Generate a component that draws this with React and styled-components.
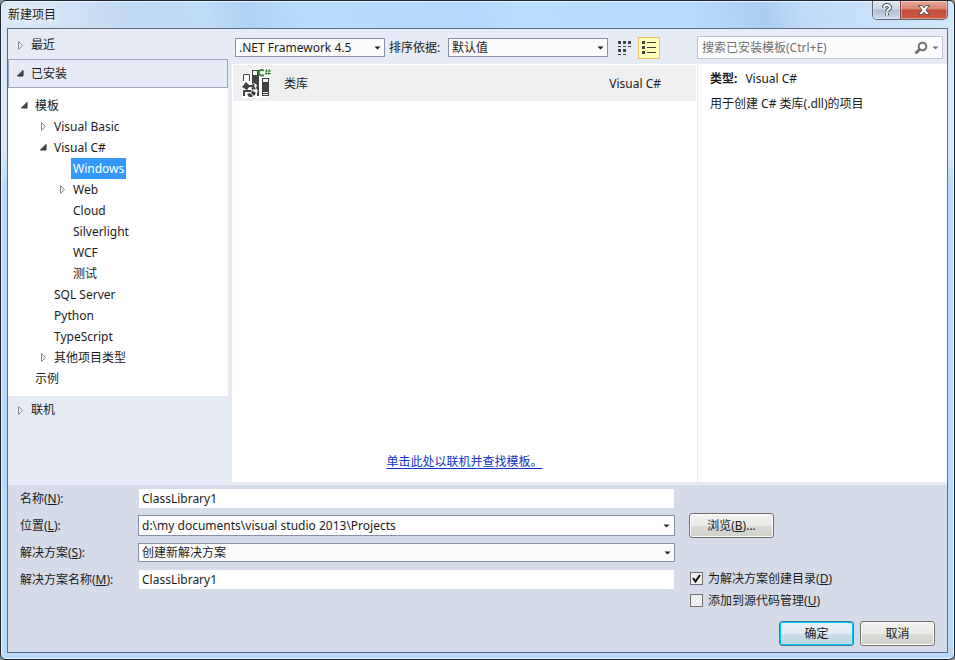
import React, { useState } from "react";
import styled, { createGlobalStyle, css } from "styled-components";

const GlobalStyle = createGlobalStyle`
  *, *::before, *::after { box-sizing: border-box; }
  body {
    margin: 0;
    background: #8a8f98;
    color: #1b1b1c;
    font-family: "Noto Sans", "Noto Sans CJK SC", sans-serif;
    font-size: 12px;
    line-height: 16px;
  }
  button, input, select { font: inherit; color: inherit; margin: 0; }
  u { text-underline-offset: 1px; }
`;

const Window = styled.main`
  display: flex;
  flex-direction: column;
  min-height: 100vh;
  padding: 0 6px 6px;
  border: 1px solid #22262e;
  border-radius: 6px;
  box-shadow: inset 0 0 0 1px #e4f3fd;
  background:
    linear-gradient(75deg, #d9e9f9 0, #cfe2f5 8%, #c3daf2 13%, #bfdcf8 22%, #b0d1f3 26%, #b9dcfd 32%, #b5d9fc 50%, #bbddff 54%, #b9dbfd 72%, #accdf0 80%, #c0dcf8 84%, #d3e8fb 100%) top / 100% 29px no-repeat,
    linear-gradient(#d6e8f9 0 155px, #b9dafb 185px);
`;

const TitleBar = styled.header`
  display: flex;
  justify-content: space-between;
  height: 27px;
`;

const Title = styled.h1`
  margin: 0;
  padding: 6px 0 0 1px;
  font-size: 12px;
  font-weight: 400;
  text-shadow: 0 0 6px #fff, 0 0 10px #fff;
`;

const Captions = styled.div`
  display: flex;
  height: 19px;
  border: 1px solid #5c6673;
  border-top: 0;
  border-radius: 0 0 5px 5px;
  overflow: hidden;
`;

const CaptionButton = styled.button`
  display: grid;
  place-items: center;
  width: ${(p) => (p.$close ? "47px" : "27px")};
  padding: 0;
  border: 0;
  box-shadow: inset 0 0 0 1px rgba(255, 255, 255, 0.4);
  background: ${(p) =>
    p.$close
      ? "linear-gradient(#e9a89b 0, #d98474 45%, #c04a3a 50%, #cf5b44 100%)"
      : "linear-gradient(#dfe8f2 0, #cbd6e4 45%, #b0bdce 50%, #c9dbee 100%)"};
  & + & { border-left: 1px solid #7c3a38; }
`;

const Client = styled.div`
  display: flex;
  flex: 1;
  flex-direction: column;
  border: 1px solid #5d6e82;
  background: #e6ebf5;
`;

const Panes = styled.div`
  display: grid;
  flex: 1;
  grid-template-columns: 224px minmax(0, 1fr) 250px;
  padding-bottom: 3px;
`;

const Sidebar = styled.nav`
  padding: 2px 4px 0 0;
`;

const Section = styled.button`
  display: flex;
  align-items: center;
  gap: 6px;
  width: 100%;
  height: ${(p) => (p.$open ? "29px" : "28px")};
  padding: 0 7px;
  border: 1px solid ${(p) => (p.$open ? "#9ba7b7" : "transparent")};
  background: none;
`;

const Tree = styled.ul`
  margin: 0;
  padding: 7px 0;
  list-style: none;
  background: #fff;
`;

const TreeItem = styled.li`
  display: flex;
  align-items: center;
  gap: 4px;
  height: 21px;
  padding-left: ${(p) => 12 + p.$level * 19}px;
`;

const TreeLabel = styled.button`
  height: 21px;
  padding: 0 2px;
  border: 0;
  background: none;
  ${(p) => p.$selected && css`
    background: #3399ff;
    color: #fff;
  `}
`;

const Expander = styled.svg`
  flex: none;
  width: 9px;
  height: 9px;
`;

const Center = styled.section`
  display: flex;
  flex-direction: column;
`;

const Toolbar = styled.div`
  display: flex;
  align-items: center;
  gap: 4px;
  height: 35px;
  padding: 2px 3px 0;
`;

const SortLabel = styled.label`
  width: 55px;
  white-space: nowrap;
`;

const SelectBox = styled.div`
  display: grid;
  align-items: center;
  width: ${(p) => p.$width || "100%"};
  & > * { grid-area: 1 / 1; }
  & > svg { justify-self: end; margin-right: 4px; pointer-events: none; }
`;

const Select = styled.select`
  width: 100%;
  height: 19px;
  padding: 0 16px 0 3px;
  border: 1px solid #8591a8;
  border-radius: 0;
  background: #fcfcfc;
  appearance: none;
`;

const ViewButtons = styled.div`
  display: flex;
  gap: 2px;
  margin-left: 2px;
`;

const ViewButton = styled.button`
  display: grid;
  place-items: center;
  width: 22px;
  height: 22px;
  padding: 0;
  border: 1px solid ${(p) => (p.$active ? "#e5c365" : "transparent")};
  background: ${(p) => (p.$active ? "#fffbb8" : "none")};
`;

const TemplateList = styled.div`
  display: flex;
  flex: 1;
  flex-direction: column;
  justify-content: space-between;
  padding: 1px 1px 12px;
  background: #fff;
`;

const Template = styled.button`
  display: flex;
  align-items: center;
  width: 100%;
  height: 36px;
  padding: 2px 35px 0 7px;
  border: 0;
  background: #efefef;
  text-align: left;
`;

const TemplateName = styled.span`
  flex: 1;
  padding-left: 12px;
`;

const OnlineLink = styled.a`
  align-self: center;
  color: #0e32c8;
  text-underline-offset: 2px;
`;

const Details = styled.aside`
  display: flex;
  flex-direction: column;
`;

const SearchBar = styled.div`
  height: 35px;
  padding: 7px 4px 0 0;
`;

const SearchBox = styled.div`
  display: flex;
  align-items: center;
  height: 23px;
  padding-right: 3px;
  border: 1px solid #bcc4d5;
  background: #fcfcfc;
`;

const SearchInput = styled.input`
  flex: 1;
  min-width: 0;
  padding: 0 4px;
  border: 0;
  outline: 0;
  background: none;
  &::placeholder { color: #717171; opacity: 1; }
`;

const IconButton = styled.button`
  display: grid;
  place-items: center;
  padding: 0;
  border: 0;
  background: none;
  color: ${(p) => (p.$muted ? "#717171" : "#1b293e")};
  & + & { margin-left: 4px; }
`;

const Description = styled.div`
  flex: 1;
  padding: 7px 12px;
  border-left: 1px solid #e6ebf5;
  background: #fff;
`;

const Paragraph = styled.p`
  margin: 0 0 9px;
  & > strong { margin-right: 8px; }
`;

const Form = styled.form`
  display: grid;
  grid-template-columns: 118px minmax(0, 1fr) 260px;
  grid-template-rows: repeat(4, 27px) auto;
  align-items: center;
  padding: 0 12px 6px;
  background: #d6dbe9;
`;

const FieldLabel = styled.label`
  grid-column: 1;
`;

const TextInput = styled.input`
  grid-column: 2;
  height: 19px;
  margin: 0 1px;
  padding: 0 3px;
  border: 0;
  background: #fff;
`;

const ComboBox = styled.div`
  display: flex;
  grid-column: 2;
  height: 21px;
  padding-right: 4px;
  border: 1px solid #8591a8;
  background: #fff;
`;

const ComboInput = styled.input`
  flex: 1;
  min-width: 0;
  padding: 0 3px;
  border: 0;
  outline: 0;
  background: none;
`;

const FieldSelect = styled.div`
  grid-column: 2;
`;

const Side = styled.div`
  grid-column: 3;
  grid-row: ${(p) => p.$row};
  align-self: ${(p) => (p.$top ? "start" : "center")};
  padding-left: 14px;
`;

const Options = styled.div`
  display: grid;
  gap: 9px;
  padding: 6px 0 14px 1px;
`;

const Option = styled.label`
  display: flex;
  align-items: center;
  gap: 5px;
  line-height: 13px;
`;

const CheckMark = styled.span`
  display: grid;
  place-items: center;
  & > * { grid-area: 1 / 1; }
  & > svg { display: none; pointer-events: none; }
  & > input:checked + svg { display: block; }
`;

const CheckInput = styled.input`
  width: 13px;
  height: 13px;
  border: 1px solid #707070;
  background: #f0f0f0;
  appearance: none;
`;

const Actions = styled.div`
  display: flex;
  grid-column: 1 / -1;
  grid-row: 6;
  justify-content: flex-end;
  gap: 6px;
`;

const PushButton = styled.button`
  width: ${(p) => (p.$wide ? "85px" : "75px")};
  height: 25px;
  padding: 0;
  border: 1px solid #707070;
  border-radius: 3px;
  background: linear-gradient(#f3f3f2 0, #e9e9e8 50%, #d9d9d6 55%, #d2d2cc 100%);
  box-shadow: inset 0 0 0 1px #fafafa;
  ${(p) => p.$primary && css`
    border-color: #3c7f9c;
    background: linear-gradient(#eaf2f9 0, #dfeaf3 50%, #c9dce7 55%, #c2d8df 100%);
    box-shadow: inset 0 0 0 1px #00c8fa;
  `}
`;

const Arrow = () => (
  <svg width="7" height="4" viewBox="0 0 7 4" aria-hidden="true">
    <path d="M0.500 0.500h6L3.500 3.500z" fill="currentColor" />
  </svg>
);

const Toggle = ({ state }) => (
  <Expander viewBox="0 0 9 9" aria-hidden="true">
    {state === "open" && <path d="M7 1.500v5.500H1.500z" fill="#4a4f56" stroke="#2a2a2c" />}
    {state === "closed" && <path d="M2.500 0.500v8L6.500 4.500z" fill="#f4f4f6" stroke="#858b93" />}
  </Expander>
);

const LibraryIcon = () => (
  <svg width="32" height="32" viewBox="0 0 32 32" aria-hidden="true">
    <path d="M2 5h8V1h9V0h12v9h-2v20h-8v1H2v-9l-1-3 2-4z" fill="#fff" />
    <path d="M3.500 13V6.500h6V13" fill="#fff" stroke="#424242" />
    <path d="M12 2h7v26h-2v-3l1-2-2-3 1-3-3-2-2 1z" fill="#424242" />
    <path d="M13 3h4v4h-4z" fill="#fff" />
    <path d="M22 10h7v18h-7z" fill="#424242" />
    <path d="M23 11h5v3h-5zM23 24h5v1h-5zM23 26h5v1h-5z" fill="#efefef" />
    <path d="M6 14l4 4-3 4-5-3z" fill="#424242" />
    <path d="M3 23h2v5H3zM7 26l3-1 3 3-1 1H9z" fill="#424242" />
    <path d="M8 18h5M13.500 16v5M4 24v-1h7M11.500 20.500h4" fill="none" stroke="#424242" strokeWidth="2" />
    <path d="M12 22l4 3-2 3-3-3z" fill="#424242" />
    <path d="M24 2.500c-3.500-1.200-5-.2-5 2.200s1.500 3.500 5 2.500" fill="none" stroke="#388a34" strokeWidth="2" />
    <path d="M26.500 1l-.5 6M29.200 1l-.5 6M25 3h6M25 5.500h6" fill="none" stroke="#388a34" />
  </svg>
);

const SmallIconsGlyph = () => (
  <svg width="14" height="14" viewBox="0 0 14 14" aria-hidden="true">
    <path d="M0 0h3v3H0zM5 0h3v3H5zM10 0h3v3h-3zM0 8h3v3H0zM5 8h3v3H5zM0 5h3v1H0zM5 5h3v1H5zM10 5h3v1h-3zM0 13h3v1H0zM5 13h3v1H5z" fill="#424242" />
  </svg>
);

const ListGlyph = () => (
  <svg width="14" height="14" viewBox="0 0 14 14" aria-hidden="true">
    <path d="M0 0h3v3H0zM0 5h3v3H0zM0 10h3v3H0zM5 1h9v1H5zM5 6h9v1H5zM5 11h9v1H5z" fill="#424242" />
  </svg>
);

const SearchGlyph = () => (
  <svg width="14" height="14" viewBox="0 0 14 14" aria-hidden="true">
    <circle cx="8.500" cy="5.500" r="3.800" fill="none" stroke="#717171" strokeWidth="2" />
    <path d="M6 8L1.500 12.500" stroke="#717171" strokeWidth="3" />
  </svg>
);

const HelpGlyph = () => (
  <svg width="12" height="14" viewBox="0 0 12 14" aria-hidden="true">
    <g fill="none" strokeLinejoin="round">
      <path d="M3 4.800c0-3.600 6-3.600 6-.3C9 6.500 6 6.500 6 8.800M6 10.200v2" stroke="#454c58" strokeWidth="4" />
      <path d="M3 4.800c0-3.600 6-3.600 6-.3C9 6.500 6 6.500 6 8.800M6 10.200v2" stroke="#fff" strokeWidth="2" />
    </g>
  </svg>
);

const CloseGlyph = () => (
  <svg width="14" height="12" viewBox="0 0 14 12" aria-hidden="true">
    <path d="M1.500 1.500h3.500l2 2.300 2-2.300h3.500L9 6l3.500 4.500H9L7 8.200l-2 2.300H1.500L5 6z" fill="#fff" stroke="#53505a" />
  </svg>
);

const nodes = [
  ["模板", 0, "open"],
  ["Visual Basic", 1, "closed"],
  ["Visual C#", 1, "open"],
  ["Windows", 2],
  ["Web", 2, "closed"],
  ["Cloud", 2],
  ["Silverlight", 2],
  ["WCF", 2],
  ["测试", 2],
  ["SQL Server", 1],
  ["Python", 1],
  ["TypeScript", 1],
  ["其他项目类型", 1, "closed"],
  ["示例", 0],
];

function CheckOption({ text, accessKey, defaultChecked }) {
  return (
    <Option>
      <CheckMark>
        <CheckInput type="checkbox" defaultChecked={defaultChecked} />
        <svg width="9" height="9" viewBox="0 0 9 9" aria-hidden="true">
          <path d="M1 4l2.500 3.500L8 1" fill="none" stroke="#111" strokeWidth="2" />
        </svg>
      </CheckMark>
      <span>{text}(<u>{accessKey}</u>)</span>
    </Option>
  );
}

export default function App() {
  const [selected, setSelected] = useState("Windows");
  return (
    <>
      <GlobalStyle />
      <Window>
        <TitleBar>
          <Title>新建项目</Title>
          <Captions>
            <CaptionButton aria-label="Help"><HelpGlyph /></CaptionButton>
            <CaptionButton $close aria-label="Close"><CloseGlyph /></CaptionButton>
          </Captions>
        </TitleBar>
        <Client>
          <Panes>
            <Sidebar>
              <Section><Toggle state="closed" />最近</Section>
              <Section $open><Toggle state="open" />已安装</Section>
              <Tree>
                {nodes.map(([label, level, state]) => (
                  <TreeItem key={label} $level={level}>
                    <Toggle state={state} />
                    <TreeLabel $selected={selected === label} onClick={() => setSelected(label)}>{label}</TreeLabel>
                  </TreeItem>
                ))}
              </Tree>
              <Section><Toggle state="closed" />联机</Section>
            </Sidebar>
            <Center>
              <Toolbar>
                <SelectBox $width="150px">
                  <Select aria-label="Framework"><option>.NET Framework 4.5</option></Select>
                  <Arrow />
                </SelectBox>
                <SortLabel htmlFor="sort">排序依据:</SortLabel>
                <SelectBox $width="160px">
                  <Select id="sort"><option>默认值</option></Select>
                  <Arrow />
                </SelectBox>
                <ViewButtons>
                  <ViewButton aria-label="Small icons"><SmallIconsGlyph /></ViewButton>
                  <ViewButton $active aria-label="List"><ListGlyph /></ViewButton>
                </ViewButtons>
              </Toolbar>
              <TemplateList>
                <Template>
                  <LibraryIcon />
                  <TemplateName>类库</TemplateName>
                  <span>Visual C#</span>
                </Template>
                <OnlineLink href="#online">单击此处以联机并查找模板。</OnlineLink>
              </TemplateList>
            </Center>
            <Details>
              <SearchBar>
                <SearchBox>
                  <SearchInput aria-label="Search" placeholder="搜索已安装模板(Ctrl+E)" />
                  <IconButton $muted aria-label="Search"><SearchGlyph /></IconButton>
                  <IconButton $muted aria-label="Search options"><Arrow /></IconButton>
                </SearchBox>
              </SearchBar>
              <Description>
                <Paragraph><strong>类型:</strong>Visual C#</Paragraph>
                <Paragraph>用于创建 C# 类库(.dll)的项目</Paragraph>
              </Description>
            </Details>
          </Panes>
          <Form onSubmit={(e) => e.preventDefault()}>
            <FieldLabel htmlFor="name">名称(<u>N</u>):</FieldLabel>
            <TextInput id="name" defaultValue="ClassLibrary1" />
            <FieldLabel htmlFor="location">位置(<u>L</u>):</FieldLabel>
            <ComboBox>
              <ComboInput id="location" defaultValue={"d:\\my documents\\visual studio 2013\\Projects"} />
              <IconButton type="button" aria-label="Locations"><Arrow /></IconButton>
            </ComboBox>
            <Side $row="2"><PushButton type="button" $wide>浏览(<u>B</u>)...</PushButton></Side>
            <FieldLabel htmlFor="solution">解决方案(<u>S</u>):</FieldLabel>
            <FieldSelect>
              <SelectBox>
                <Select id="solution"><option>创建新解决方案</option></Select>
                <Arrow />
              </SelectBox>
            </FieldSelect>
            <FieldLabel htmlFor="solutionName">解决方案名称(<u>M</u>):</FieldLabel>
            <TextInput id="solutionName" defaultValue="ClassLibrary1" />
            <Side $row="4 / span 2" $top>
              <Options>
                <CheckOption text="为解决方案创建目录" accessKey="D" defaultChecked />
                <CheckOption text="添加到源代码管理" accessKey="U" />
              </Options>
            </Side>
            <Actions>
              <PushButton $primary>确定</PushButton>
              <PushButton type="button">取消</PushButton>
            </Actions>
          </Form>
        </Client>
      </Window>
    </>
  );
}
